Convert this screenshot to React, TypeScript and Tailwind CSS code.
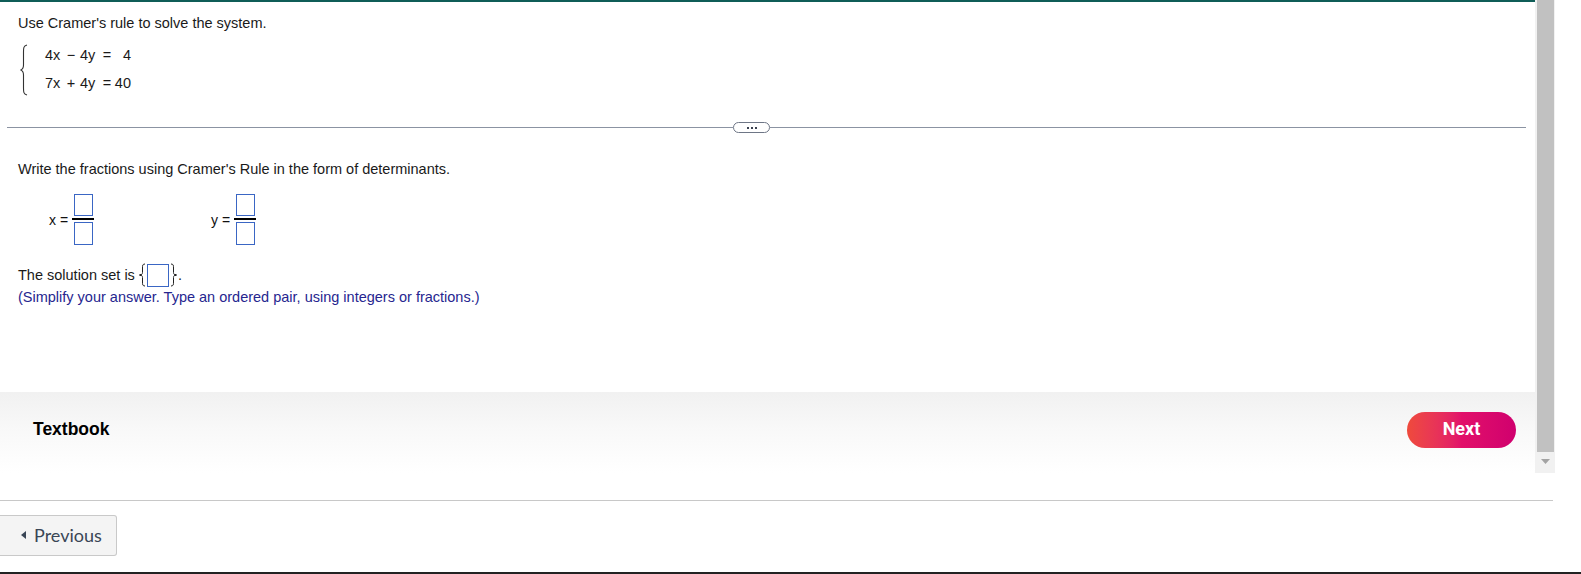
import React from "react";

const AnswerBox = ({ w = "w-[19px]", h = "h-[22px]" }: { w?: string; h?: string }) => (
  <div className={`${w} ${h} border border-[#3a66c4] bg-white`} />
);

const Fraction = ({ label }: { label: string }) => (
  <div className="flex items-center">
    <span className="w-[23px] text-[14px] leading-4 text-[#111]">{label}</span>
    <div className="flex flex-col items-center">
      <AnswerBox />
      <div className="w-[22px] h-[2px] bg-black my-[2px]" />
      <AnswerBox h="h-[23px]" />
    </div>
  </div>
);

const Brace = ({ flip = false }: { flip?: boolean }) => (
  <svg width="8" height="24" viewBox="0 0 8 24" className={flip ? "-scale-x-100" : ""}>
    <path
      d="M6 1 C3.5 1 3.5 2.5 3.5 5 L3.5 9.5 C3.5 11 2.5 12 1 12 C2.5 12 3.5 13 3.5 14.5 L3.5 19 C3.5 21.5 3.5 23 6 23"
      fill="none"
      stroke="#222"
      strokeWidth="1"
    />
    <circle cx="1.3" cy="12" r="1.1" fill="#222" />
  </svg>
);

export default function App() {
  return (
    <div className="w-[1581px] h-[574px] bg-white flex flex-col overflow-hidden font-['Liberation_Sans',Arial,sans-serif]">
      {/* scrolling question area */}
      <div className="flex h-[473px] w-[1555px]">
        <div className="w-[1535px] h-full flex flex-col border-t-2 border-[#0f5d57]">
          <div className="pl-[18px] pt-[13px] text-[14.5px] leading-4 text-[#1a1a1a]">
            Use Cramer's rule to solve the system.
          </div>

          <div className="flex items-center mt-[11px] ml-[19px]">
            <svg width="10" height="52" viewBox="0 0 10 52">
              <path
                d="M8 1 C4.5 2 4.5 4 4.5 8 L4.5 21 C4.5 24 3.5 25.5 1.5 26 C3.5 26.5 4.5 28 4.5 31 L4.5 44 C4.5 48 4.5 50 8 51"
                fill="none"
                stroke="#333"
                strokeWidth="1.1"
              />
            </svg>
            <div className="ml-[16px] grid grid-cols-[17px_18px_20px_14px_17px] auto-rows-[28px] items-center text-[14.5px] text-[#1a1a1a]">
              <span>4x</span>
              <span className="text-center">−</span>
              <span>4y</span>
              <span className="text-center">=</span>
              <span className="text-right">4</span>
              <span>7x</span>
              <span className="text-center">+</span>
              <span>4y</span>
              <span className="text-center">=</span>
              <span className="text-right">40</span>
            </div>
          </div>

          <div className="flex items-center ml-[7px] w-[1519px] mt-[24px] h-[11px]">
            <div className="w-[726px] h-px bg-[#8b93a2]" />
            <div className="w-[37px] h-[11px] rounded-full border border-[#6e7686] bg-white flex items-center justify-center gap-[2px]">
              <span className="w-[2px] h-[2px] bg-[#3a4150]" />
              <span className="w-[2px] h-[2px] bg-[#3a4150]" />
              <span className="w-[2px] h-[2px] bg-[#3a4150]" />
            </div>
            <div className="flex-1 h-px bg-[#8b93a2]" />
          </div>

          <div className="pl-[18px] mt-[28px] text-[14.5px] leading-4 text-[#1a1a1a]">
            Write the fractions using Cramer's Rule in the form of determinants.
          </div>

          <div className="flex items-center ml-[49px] mt-[17px]">
            <Fraction label="x =" />
            <div className="ml-[117px]">
              <Fraction label="y =" />
            </div>
          </div>

          <div className="flex items-center pl-[18px] mt-[18px] text-[14.5px] leading-4 text-[#1a1a1a]">
            <span>The solution set is</span>
            <span className="ml-[4px] flex items-center">
              <Brace />
              <div className="w-[22px] h-[23px] border border-[#3a66c4] bg-white" />
              <Brace flip />
            </span>
            <span className="ml-[1px]">.</span>
          </div>
          <div className="pl-[18px] mt-[2px] text-[14.5px] leading-4 text-[#26268f]">
            (Simplify your answer. Type an ordered pair, using integers or fractions.)
          </div>

          <div className="flex-1" />

          <div className="h-[81px] flex items-start justify-between pl-[33px] pr-[19px] pt-[20px] bg-gradient-to-b from-[#f1f1f1] via-[#f9f9f9] to-white">
            <span className="mt-[7px] text-[17.5px] font-bold text-black leading-5">Textbook</span>
            <button className="w-[109px] h-[36px] pb-[3px] rounded-full bg-gradient-to-r from-[#ef4a3b] via-[#e2106a] to-[#d0006e] text-white text-[18px] leading-none font-bold font-['Roboto',sans-serif]">
              Next
            </button>
          </div>
        </div>

        {/* scrollbar */}
        <div className="w-[20px] h-full bg-[#f1f1f1] flex flex-col">
          <div className="ml-[2px] w-[17px] h-[452px] bg-[#c1c1c1]" />
          <div className="flex-1 flex justify-center pt-[7px]">
            <svg width="9" height="5" viewBox="0 0 9 5">
              <path d="M0 0 L9 0 L4.5 5 Z" fill="#a3a3a3" />
            </svg>
          </div>
        </div>
      </div>

      {/* bottom navigation */}
      <div className="mt-[27px] w-[1553px] h-px bg-[#c8c8c8]" />
      <div className="mt-[14px] flex">
        <button className="w-[117px] h-[41px] pb-[1px] rounded-r-[3px] border border-l-0 border-[#c9c9c9] bg-[#f4f4f4] flex items-center pl-[21px] gap-[8px] text-[18px] text-[#3a4656] font-['Lato',sans-serif]">
          <svg width="5" height="8" viewBox="0 0 5 8">
            <path d="M5 0 L5 8 L0 4 Z" fill="#3a4656" />
          </svg>
          Previous
        </button>
      </div>
      <div className="mt-auto h-[2px] w-full bg-[#222]" />
    </div>
  );
}
